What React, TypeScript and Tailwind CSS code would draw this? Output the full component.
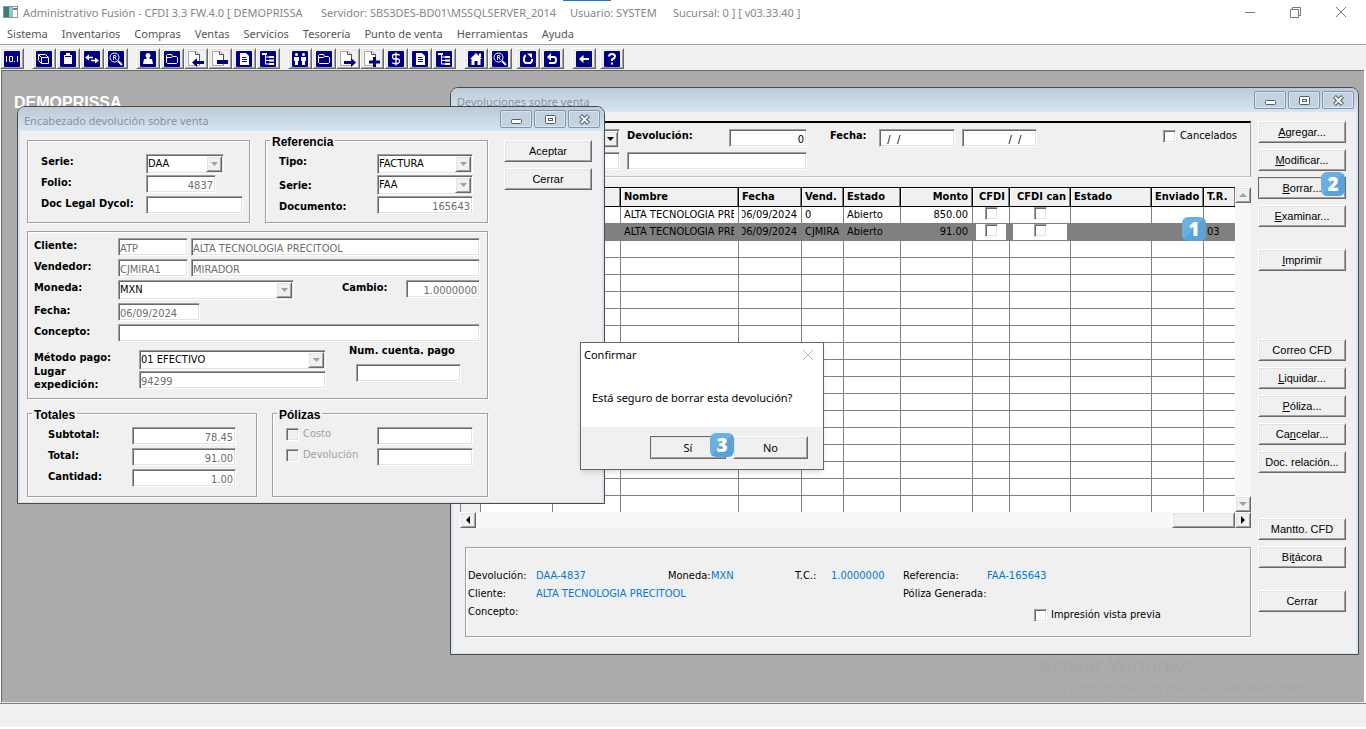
import React from 'react';
import type { ReactNode } from 'react';

const SUNKEN =
  'border border-t-[#a0a0a0] border-l-[#a0a0a0] border-r-white border-b-white shadow-[inset_1px_1px_0_#696969,inset_-1px_-1px_0_#e3e3e3]';
const RAISED =
  'border border-t-white border-l-white border-r-[#696969] border-b-[#696969] bg-[#f0f0f0] shadow-[inset_1px_1px_0_#e3e3e3,inset_-1px_-1px_0_#a0a0a0]';
const ETCHED = 'border border-[#a0a0a0] shadow-[1px_1px_0_#fff,inset_1px_1px_0_#fff]';
const DITHER = 'bg-[#f8f8f8]';

/* ---------- basic controls ---------- */

function Field({ id, label, value = '', className = '' }: { id?: string; label?: string; value?: string; className?: string }) {
  return (
    <input
      id={id}
      aria-label={label}
      defaultValue={value}
      className={`h-[18px] min-w-0 bg-white pt-[2px] pr-[2px] pl-px text-[11px] leading-[14px] outline-none ${SUNKEN} ${className}`}
    />
  );
}

function Combo({ id, label, value = '', dark = false, className = '' }: { id?: string; label?: string; value?: string; dark?: boolean; className?: string }) {
  return (
    <span className={`grid h-5 bg-white p-px ${SUNKEN} ${className}`}>
      <select
        id={id}
        aria-label={label}
        defaultValue={value}
        className="col-start-1 row-start-1 min-w-0 appearance-none bg-transparent text-[11px] leading-[14px] text-black outline-none"
      >
        <option>{value}</option>
      </select>
      <span className={`pointer-events-none col-start-1 row-start-1 flex w-4 items-center justify-center justify-self-end ${RAISED}`}>
        <svg width="7" height="4" viewBox="0 0 7 4" fill={dark ? '#000' : '#a0a0a0'}>
          <path d="M0 0h7L3.500 4z" />
        </svg>
      </span>
    </span>
  );
}

function Check({ id, label, muted = false }: { id: string; label?: string; muted?: boolean }) {
  return (
    <input
      id={id}
      aria-label={label}
      type="checkbox"
      disabled={muted}
      className={`size-[13px] shrink-0 appearance-none ${muted ? 'bg-[#f0f0f0]' : 'bg-white'} ${SUNKEN}`}
    />
  );
}

function PushButton({ text, hot = -1, primary = false, className = '' }: { text: string; hot?: number; primary?: boolean; className?: string }) {
  return (
    <button
      type="button"
      className={`h-[22px] font-["Liberation_Sans",Arial,sans-serif] text-[11px] leading-[14px] text-black ${RAISED} ${primary ? 'outline outline-1 -outline-offset-1 outline-[#696969]' : ''} ${className}`}
    >
      {hot < 0 ? (
        text
      ) : (
        <>
          {text.slice(0, hot)}
          <u className="underline-offset-1">{text[hot]}</u>
          {text.slice(hot + 1)}
        </>
      )}
    </button>
  );
}

function Label({ htmlFor, children, className = 'leading-4' }: { htmlFor?: string; children: ReactNode; className?: string }) {
  return (
    <label htmlFor={htmlFor} className={`shrink-0 whitespace-nowrap font-bold text-black ${className}`}>
      {children}
    </label>
  );
}

function Group({ legend, children, className = '' }: { legend?: string; children: ReactNode; className?: string }) {
  return (
    <fieldset className={`relative min-w-0 ${ETCHED} ${className}`}>
      {legend && (
        <legend className='absolute -top-[6px] left-1 bg-[#f0f0f0] px-[2px] font-["Liberation_Sans",Arial,sans-serif] text-[12px] font-bold leading-[14px] text-black'>
          {legend}
        </legend>
      )}
      {children}
    </fieldset>
  );
}

function Badge({ n, className = '' }: { n: number; className?: string }) {
  return (
    <span
      className={`absolute z-10 flex size-6 items-center justify-center rounded-md bg-[linear-gradient(135deg,#6cafe1_50%,#5aa2da_50%)] font-["Open_Sans",sans-serif] text-[19px] font-extrabold leading-none text-white ${className}`}
    >
      {n}
    </span>
  );
}

/* ---------- child windows ---------- */

const CAPTION_ICONS: { name: string; art: ReactNode }[] = [
  { name: 'Minimizar', art: <rect x="1.5" y="5.500" width="10" height="4" rx="1" fill="#fff" stroke="#555b66" /> },
  {
    name: 'Maximizar',
    art: (
      <>
        <rect x="1.500" y="1.500" width="10" height="8" rx="1" fill="#fff" stroke="#555b66" />
        <rect x="4.500" y="4.500" width="4" height="2" fill="#fff" stroke="#555b66" />
      </>
    ),
  },
  {
    name: 'Cerrar ventana',
    art: (
      <>
        <path d="M2.500 1.500l8 8M10.500 1.500l-8 8" stroke="#555b66" strokeWidth="4" />
        <path d="M3 2l7 7M10 2l-7 7" stroke="#fff" strokeWidth="1.800" />
      </>
    ),
  },
];

function ChildWindow({ title, className = '', children }: { title: string; className?: string; children: ReactNode }) {
  return (
    <section
      className={`absolute overflow-hidden rounded-t-lg border border-[#4a4a4a] bg-[#d7e5f3] px-[2px] pb-px ${className}`}
    >
      <header className="-mx-[2px] flex h-6 items-center bg-[linear-gradient(#bccad8,#d7e5f3)] pr-1 pl-[6px]">
        <h2 className='grow pt-[3px] font-["Noto_Sans",sans-serif] text-[11px] leading-4 text-[#8b9299]'>{title}</h2>
        <div className="flex gap-[2px]">
          {CAPTION_ICONS.map((c) => (
            <button
              key={c.name}
              type="button"
              aria-label={c.name}
              className="flex h-[18px] w-8 items-center justify-center rounded-[2px] border border-[#8493ad] bg-[#c4d2e0] shadow-[inset_0_0_0_1px_#d9e5f1]"
            >
              <svg width="13" height="11" viewBox="0 0 13 11" fill="none">
                {c.art}
              </svg>
            </button>
          ))}
        </div>
      </header>
      <div className="bg-[#f0f0f0]">{children}</div>
    </section>
  );
}

/* ---------- toolbar ---------- */

type IconName =
  | 'num' | 'copy' | 'clip' | 'swap' | 'find' | 'user' | 'folder' | 'docIn' | 'docMinus' | 'doc' | 'tree'
  | 'users' | 'docOut' | 'docPlus' | 'money' | 'home' | 'redo' | 'undo' | 'back' | 'help';

const PAGE = (
  <>
    <path d="M.5.500h7l4 3v11H.5z" fill="#fff" stroke="#a8a8a8" />
    <path d="M7.500.500v3h4v10" stroke="#555" fill="none" />
  </>
);

const ICONS: Record<IconName, ReactNode> = {
  num: <path d="M2.500 5v6M5.500 5.500h3v5h-3zM10.500 10v1M13.500 5v6" />,
  copy: <path d="M5.500 6.500h7v6h-7zM5.500 6.500l-3-3v6l3 3M2.500 3.500h7l3 3" />,
  clip: (
    <>
      <path d="M4 4h8v9H4zM6 2h4v3H6z" fill="#fff" stroke="none" />
      <path d="M5 5.500h6" stroke="#000080" />
    </>
  ),
  swap: (
    <>
      <path d="M3 6.500h6M7 9.500h6" strokeWidth="1.500" />
      <path d="M1 6.500l4-3v6zM15 9.500l-4-3v6z" fill="#fff" stroke="none" />
    </>
  ),
  find: (
    <>
      <circle cx="6.500" cy="6.500" r="4.500" />
      <path d="M5.500 9V4.500H7q1 0 1 1t-1 1H5.500M7 6.500L8.500 9" strokeWidth=".9" />
      <path d="M10 10l4 4" strokeWidth="2" />
    </>
  ),
  user: <path d="M8 2a2.500 2.500 0 0 1 1.500 4.500V8H12l1 5H3l1-5h2.500V6.500A2.500 2.500 0 0 1 8 2z" fill="#fff" stroke="none" />,
  folder: <path d="M2.500 11.500v-7l1-1h4l1 2h4l1 1v5l-1 1h-9zM2.500 6.500h5l1-1" />,
  docIn: (
    <>
      {PAGE}
      <path d="M4 11.500L9 7v3h7v3H9v3z" fill="#000080" stroke="none" />
    </>
  ),
  docMinus: (
    <>
      {PAGE}
      <path d="M5 9h11v4H5z" fill="#000080" stroke="none" />
    </>
  ),
  docOut: (
    <>
      {PAGE}
      <path d="M16 11.500L11 7v3H4v3h7v3z" fill="#000080" stroke="none" />
    </>
  ),
  docPlus: (
    <>
      {PAGE}
      <path d="M9 6h3v3.500h4v3h-4V16H9v-3.500H5v-3h4z" fill="#000080" stroke="none" />
    </>
  ),
  doc: (
    <>
      <path d="M4 2h6l3 3v9H4z" fill="#fff" stroke="none" />
      <path d="M6 6.500h4M6 8.500h5M6 10.500h5" stroke="#000080" />
    </>
  ),
  tree: (
    <>
      <path d="M2 2h5v2H2zM9 5h5v2H9zM9 8.500h5v2H9zM9 12h5v2H9z" fill="#fff" stroke="none" />
      <path d="M5.500 4v9H9M5.500 6H9M5.500 9.500H9" />
    </>
  ),
  users: (
    <path
      d="M4.500 2a1.500 1.500 0 1 1 0 3 1.500 1.500 0 0 1 0-3zM2 6h5v4H6v4H3v-4H2zM11.500 2a1.500 1.500 0 1 1 0 3 1.500 1.500 0 0 1 0-3zM9 6h5v4h-1v4h-3v-4H9z"
      fill="#fff"
      stroke="none"
    />
  ),
  money: <path d="M11.500 4.500q0-1-1.500-1H6q-1.500 0-1.500 2T6 8h4q1.500 0 1.500 2T10 12.500H6q-1.500 0-1.500-1M8 1.500v13" strokeWidth="1.300" />,
  home: <path d="M8 2l6 6h-1.500v6H9.500v-4h-3v4h-3V8H2zM11 2.500h2V6h-2z" fill="#fff" stroke="none" />,
  redo: (
    <>
      <path d="M6 4.500Q4 5 4 8v2l1.500 2h5L12 10V8" strokeWidth="2" />
      <path d="M7 2.500h5v5z" fill="#fff" stroke="none" />
    </>
  ),
  undo: (
    <>
      <path d="M6 6h4q2 0 2 3t-2 3H5" strokeWidth="2" />
      <path d="M3 6l4-4v8z" fill="#fff" stroke="none" />
    </>
  ),
  back: (
    <>
      <path d="M6 8h7" strokeWidth="2" />
      <path d="M3 8l4.500-4v8z" fill="#fff" stroke="none" />
    </>
  ),
  help: (
    <>
      <path d="M5 5.500Q5 3 8 3t3 2.500Q11 7 8 8.500V10" strokeWidth="2" />
      <path d="M7 11.500h2v2H7z" fill="#fff" stroke="none" />
    </>
  ),
};

const PLAIN: IconName[] = ['docIn', 'docMinus', 'docOut', 'docPlus'];

const TOOLBAR: { gap: string; items: IconName[] }[] = [
  { gap: '', items: ['num'] },
  { gap: 'ml-2', items: ['copy', 'clip', 'swap', 'find'] },
  { gap: 'ml-2', items: ['user', 'folder', 'docIn', 'docMinus', 'doc', 'tree'] },
  { gap: 'ml-2', items: ['users', 'folder', 'docOut', 'docPlus', 'money', 'doc', 'tree'] },
  { gap: 'ml-2', items: ['home', 'find'] },
  { gap: 'ml-1', items: ['redo', 'undo'] },
  { gap: 'ml-2', items: ['back'] },
  { gap: 'ml-1', items: ['help'] },
];

function Toolbar() {
  return (
    <div role="toolbar" className="flex h-[25px] items-end bg-[#f0f0f0] pb-px">
      {TOOLBAR.map((g, gi) => (
        <div key={gi} className={`flex ${g.gap}`}>
          {g.items.map((name, i) => (
            <button
              key={i}
              type="button"
              aria-label={name}
              className={`flex h-[21px] w-6 items-center justify-center ${RAISED}`}
            >
              <svg width="16" height="16" viewBox="0 0 16 16" fill="none" stroke="#fff">
                {!PLAIN.includes(name) && <rect width="16" height="16" rx="1" fill="#000080" stroke="none" />}
                {ICONS[name]}
              </svg>
            </button>
          ))}
        </div>
      ))}
    </div>
  );
}

/* ---------- returns list ---------- */

const COLUMNS = [
  { w: 20, text: '', cls: '' },
  { w: 72, text: '', cls: '' },
  { w: 68, text: '', cls: '' },
  { w: 118, text: 'Nombre', cls: 'text-left' },
  { w: 63, text: 'Fecha', cls: 'text-left' },
  { w: 42, text: 'Vend.', cls: 'text-left' },
  { w: 57, text: 'Estado', cls: 'text-left' },
  { w: 72, text: 'Monto', cls: 'text-right' },
  { w: 37, text: 'CFDI', cls: 'text-right' },
  { w: 61, text: 'CFDI can', cls: 'text-right' },
  { w: 81, text: 'Estado', cls: 'text-left' },
  { w: 52, text: 'Enviado', cls: 'text-left' },
  { w: 32, text: 'T.R.', cls: 'text-left' },
];

const RECORDS = [
  { name: 'ALTA TECNOLOGIA PRECITOOL', date: '06/09/2024', seller: '0', state: 'Abierto', amount: '850.00', tr: '' },
  { name: 'ALTA TECNOLOGIA PRECITOOL', date: '06/09/2024', seller: 'CJMIRA1', state: 'Abierto', amount: '91.00', tr: '03' },
];

const CELL = 'h-[17px] overflow-hidden whitespace-nowrap border-l border-b border-[#808080] p-0';

function Clip({ children, end = false }: { children: ReactNode; end?: boolean }) {
  return <div className={`mr-1 ml-[3px] flex overflow-hidden leading-4 ${end ? 'justify-end' : ''}`}>{children}</div>;
}

function RecordsTable() {
  return (
    <table className="w-full min-w-0 table-fixed border-separate border-spacing-0 bg-white text-[11px] text-black">
      <colgroup>
        {COLUMNS.map((c, i) => (
          <col key={i} style={{ width: c.w }} />
        ))}
      </colgroup>
      <thead>
        <tr>
          {COLUMNS.map((c, i) => (
            <th
              key={i}
              className={`h-5 overflow-hidden whitespace-nowrap border-t border-b border-l border-black bg-[#f0f0f0] py-0 pr-1 pl-[3px] leading-4 font-bold shadow-[inset_-1px_0_0_#808080,inset_1px_1px_0_#fff] ${c.cls}`}
            >
              {c.text}
            </th>
          ))}
        </tr>
      </thead>
      <tbody>
        {RECORDS.map((r, i) => (
          <tr key={i} className={i === 1 ? 'bg-[#808080]' : ''}>
            <td className={`${CELL} bg-[#f0f0f0]`} />
            <td className={CELL} />
            <td className={CELL} />
            <td className={CELL}><Clip>{r.name}</Clip></td>
            <td className={CELL}><Clip end>{r.date}</Clip></td>
            <td className={CELL}><Clip>{r.seller}</Clip></td>
            <td className={CELL}><Clip>{r.state}</Clip></td>
            <td className={CELL}><Clip end>{r.amount}</Clip></td>
            <td className={CELL}>
              <div className="mx-[3px] flex h-4 items-start justify-center bg-white"><Check id={`cfdi-${i}`} label="CFDI" /></div>
            </td>
            <td className={CELL}>
              <div className="mx-[3px] flex h-4 items-start justify-center bg-white"><Check id={`cfdi-can-${i}`} label="CFDI cancelado" /></div>
            </td>
            <td className={CELL} />
            <td className={CELL} />
            <td className={CELL}>
              <Clip>{r.tr}</Clip>
            </td>
          </tr>
        ))}
        {Array.from({ length: 16 }, (_, i) => (
          <tr key={i}>
            {COLUMNS.map((_c, j) => (
              <td
                key={j}
                className={`overflow-hidden border-l border-[#808080] p-0 ${i === 15 ? 'h-4' : 'h-[17px] border-b'} ${j === 0 ? 'bg-[#f0f0f0]' : ''}`}
              />
            ))}
          </tr>
        ))}
      </tbody>
    </table>
  );
}

function ScrollArrow({ label, d, active = false }: { label: string; d: string; active?: boolean }) {
  return (
    <button type="button" aria-label={label} className={`flex size-4 shrink-0 items-center justify-center ${RAISED}`}>
      <svg width="8" height="8" viewBox="0 0 8 8" fill={active ? '#000' : '#a0a0a0'}>
        <path d={d} />
      </svg>
    </button>
  );
}

function Info({ label, value }: { label: string; value?: string }) {
  return (
    <>
      <dt className="text-black">{label}</dt>
      <dd className="text-[#0078d7]">{value}</dd>
    </>
  );
}

const ACTIONS: { gap: string; items: { text: string; hot: number; primary?: boolean }[] }[] = [
  {
    gap: '',
    items: [
      { text: 'Agregar...', hot: 0 },
      { text: 'Modificar...', hot: 0 },
      { text: 'Borrar...', hot: 0, primary: true },
      { text: 'Examinar...', hot: 0 },
    ],
  },
  { gap: 'mt-[22px]', items: [{ text: 'Imprimir', hot: 0 }] },
  {
    gap: 'mt-[68px]',
    items: [
      { text: 'Correo CFD', hot: -1 },
      { text: 'Liquidar...', hot: 0 },
      { text: 'Póliza...', hot: 0 },
      { text: 'Cancelar...', hot: 2 },
      { text: 'Doc. relación...', hot: -1 },
    ],
  },
  { gap: 'mt-[45px]', items: [{ text: 'Mantto. CFD', hot: -1 }, { text: 'Bitácora', hot: 2 }] },
  { gap: 'mt-[22px]', items: [{ text: 'Cerrar', hot: -1 }] },
];

function ReturnsWindow() {
  return (
    <ChildWindow title="Devoluciones sobre venta" className="top-4 right-[5px] left-[448px]">
      <div className="flex gap-[7px] pt-[9px] pr-[10px] pb-4 pl-[7px]">
        <div className="min-w-0 grow">
          <div className="flex flex-col gap-[3px] border-t-2 border-r border-b border-t-black border-r-[#a0a0a0] border-b-[#c0c0c0] pt-[6px] pb-[6px] shadow-[0_1px_0_#fff]">
            <div className="flex h-5 items-start">
              <Combo label="Serie de la devolución" dark className="w-40" />
              <Label htmlFor="f-dev" className="ml-[7px] w-[102px] leading-[14px]">Devolución:</Label>
              <Field id="f-dev" value="0" className="w-[78px] text-right text-black" />
              <Label htmlFor="f-from" className="ml-[23px] w-[49px] leading-[14px]">Fecha:</Label>
              <Field id="f-from" value="  /  /" className="w-[76px] text-black" />
              <Field label="Fecha final" value="/  /    " className="ml-[7px] w-[75px] text-right text-black" />
              <label className="mr-[13px] ml-auto flex items-center gap-1 leading-[14px] text-black">
                <Check id="cancelados" />
                Cancelados
              </label>
            </div>
            <div className="flex">
              <Field label="Cliente" className="w-40" />
              <Field label="Nombre del cliente" className="ml-[7px] w-[180px]" />
            </div>
          </div>

          <div className="mt-[10px]">
            <div className="flex">
              <div className="min-w-0 grow">
                <RecordsTable />
              </div>
              <div className={`flex w-4 shrink-0 flex-col justify-between ${DITHER}`}>
                <ScrollArrow label="Subir" d="M0 6h8L4 2z" />
                <ScrollArrow label="Bajar" d="M0 2h8L4 6z" />
              </div>
            </div>
            <div className={`flex h-4 ${DITHER}`}>
              <ScrollArrow label="Izquierda" d="M6 0v8L2 4z" active />
              <div className={`ml-auto w-[63px] ${RAISED}`} />
              <ScrollArrow label="Derecha" d="M2 0v8l4-4z" active />
            </div>
          </div>

          <div className={`mt-[19px] ml-[5px] pt-[21px] pb-[11px] pl-[2px] leading-[14px] ${ETCHED}`}>
            <dl className="grid grid-cols-[68px_132px_43px_84px_36px_72px_84px_1fr] gap-y-1 whitespace-nowrap">
              <Info label="Devolución:" value="DAA-4837" />
              <Info label="Moneda:" value="MXN" />
              <Info label="T.C.:" value="1.0000000" />
              <Info label="Referencia:" value="FAA-165643" />
              <dt className="text-black">Cliente:</dt>
              <dd className="col-span-5 text-[#0078d7]">ALTA TECNOLOGIA PRECITOOL</dd>
              <dt className="col-span-2 text-black">Póliza Generada:</dt>
              <dt className="text-black">Concepto:</dt>
              <dd className="col-start-8 flex h-5 items-center pl-[47px]">
                <label className="flex items-center gap-1 text-black">
                  <Check id="vista" />
                  Impresión vista previa
                </label>
              </dd>
            </dl>
          </div>
        </div>

        <div className="flex w-[88px] shrink-0 flex-col">
          {ACTIONS.map((g, i) => (
            <div key={i} className={`flex flex-col gap-[6px] ${g.gap}`}>
              {g.items.map((b) => (
                <PushButton key={b.text} {...b} />
              ))}
            </div>
          ))}
        </div>
      </div>
    </ChildWindow>
  );
}

/* ---------- return header form ---------- */

function HeaderWindow() {
  return (
    <ChildWindow title="Encabezado devolución sobre venta" className="top-[35px] left-[15px] w-[588px]">
      <form className="flex gap-4 pt-[9px] pr-[10px] pb-[5px] pl-[7px] text-[#6d6d6d]">
        <div className="w-[461px]">
          <div className="flex gap-[15px]">
            <Group className="w-[223px] pt-[13px] pb-[5px] pl-[13px]">
              <div className="flex h-[21px]">
                <Label htmlFor="serie" className="w-[105px] leading-4">Serie:</Label>
                <Combo id="serie" value="DAA" className="w-[78px]" />
              </div>
              <div className="flex h-[21px]">
                <Label htmlFor="folio" className="w-[105px] leading-4">Folio:</Label>
                <Field id="folio" value="4837" className="w-[70px] text-right" />
              </div>
              <div className="flex h-[21px]">
                <Label htmlFor="dycol" className="w-[105px] leading-4">Doc Legal Dycol:</Label>
                <Field id="dycol" className="w-[97px]" />
              </div>
            </Group>
            <Group legend="Referencia" className="grow pt-[13px] pb-[5px] pl-[13px]">
              <div className="flex h-[21px]">
                <Label htmlFor="tipo" className="w-[98px] leading-4">Tipo:</Label>
                <Combo id="tipo" value="FACTURA" className="w-[96px]" />
              </div>
              <div className="flex h-[21px]">
                <Label htmlFor="rserie" className="w-[98px] pt-[3px] leading-4">Serie:</Label>
                <Combo id="rserie" value="FAA" className="w-[96px]" />
              </div>
              <div className="flex h-[21px]">
                <Label htmlFor="rdoc" className="w-[98px] pt-[3px] leading-4">Documento:</Label>
                <Field id="rdoc" value="165643" className="w-[96px] text-right" />
              </div>
            </Group>
          </div>

          <Group className="mt-2 pt-[6px] pr-[7px] pb-[7px] pl-[6px]">
            <div className="flex h-[21px]">
              <Label htmlFor="cli" className="w-[84px] leading-4">Cliente:</Label>
              <Field id="cli" value="ATP" className="w-[70px]" />
              <Field label="Nombre" value="ALTA TECNOLOGIA PRECITOOL" className="ml-[3px] grow" />
            </div>
            <div className="flex h-[21px]">
              <Label htmlFor="ven" className="w-[84px] leading-4">Vendedor:</Label>
              <Field id="ven" value="CJMIRA1" className="w-[70px]" />
              <Field label="Nombre del vendedor" value="MIRADOR" className="ml-[3px] grow" />
            </div>
            <div className="flex h-[23px]">
              <Label htmlFor="mon" className="w-[84px] leading-4">Moneda:</Label>
              <Combo id="mon" value="MXN" className="w-[176px]" />
              <Label htmlFor="cam" className="ml-auto w-16 leading-4">Cambio:</Label>
              <Field id="cam" value="1.0000000" className="w-[74px] text-right" />
            </div>
            <div className="flex h-[21px]">
              <Label htmlFor="fec" className="w-[84px] leading-4">Fecha:</Label>
              <Field id="fec" value="06/09/2024" className="w-[82px]" />
            </div>
            <div className="flex h-[19px]">
              <Label htmlFor="con" className="w-[84px] leading-4">Concepto:</Label>
              <Field id="con" className="grow" />
            </div>
            <div className="flex">
              <div className="flex w-[105px] flex-col pt-2">
                <Label htmlFor="met" className="leading-[14px]">Método pago:</Label>
                <label htmlFor="lug" className="font-bold leading-[13px] text-black">
                  Lugar
                  <br />
                  expedición:
                </label>
              </div>
              <div className="flex w-[187px] flex-col gap-px pt-[7px]">
                <Combo id="met" value="01 EFECTIVO" />
                <Field id="lug" value="94299" />
              </div>
              <div className="ml-[23px] flex flex-col gap-[5px]">
                <Label htmlFor="cta">Num. cuenta. pago</Label>
                <Field id="cta" className="ml-[7px] w-[105px]" />
              </div>
            </div>
          </Group>

          <div className="mt-[14px] flex gap-[15px]">
            <Group legend="Totales" className="w-[230px] pt-[13px] pb-[6px] pl-5">
              {[
                ['Subtotal:', '78.45'],
                ['Total:', '91.00'],
                ['Cantidad:', '1.00'],
              ].map(([name, value]) => (
                <div key={name} className="flex h-[21px]">
                  <Label htmlFor={name} className="w-[84px] leading-4">{name}</Label>
                  <Field id={name} value={value} className="w-[104px] text-right" />
                </div>
              ))}
            </Group>
            <Group legend="Pólizas" className="grow pt-[13px] pb-[6px] pl-[13px]">
              {['Costo', 'Devolución'].map((name) => (
                <div key={name} className="flex h-[21px] items-start">
                  <label className="flex w-[91px] items-center gap-1 leading-[14px] text-[#a0a0a0]">
                    <Check id={`pol-${name}`} muted />
                    {name}
                  </label>
                  <Field label={`Póliza ${name}`} className="w-[96px]" />
                </div>
              ))}
            </Group>
          </div>
        </div>
        <div className="flex w-[88px] flex-col gap-[6px]">
          <PushButton text="Aceptar" />
          <PushButton text="Cerrar" />
        </div>
      </form>
    </ChildWindow>
  );
}

/* ---------- confirmation ---------- */

function ConfirmDialog() {
  return (
    <div
      role="dialog"
      aria-label="Confirmar"
      className='absolute top-[271px] left-[578px] w-[244px] border border-[#666] bg-white font-["Noto_Sans",sans-serif] text-[11px] text-black shadow-md'
    >
      <div className="flex h-6 items-center justify-between pr-[10px] pl-[3px]">
        <h2 className="leading-4">Confirmar</h2>
        <button type="button" aria-label="Cerrar diálogo">
          <svg width="10" height="10" viewBox="0 0 10 10" stroke="#b8b8b8">
            <path d="M0 0l10 10M10 0L0 10" />
          </svg>
        </button>
      </div>
      <p className="px-[11px] pt-[23px] pb-[21px] leading-4">Está seguro de borrar esta devolución?</p>
      <div className="flex justify-end gap-[7px] bg-[#f0f0f0] pt-[9px] pr-[15px] pb-[10px]">
        <button type="button" className={`h-[23px] w-[76px] leading-4 outline outline-1 -outline-offset-1 outline-[#696969] ${RAISED}`}>Sí</button>
        <button type="button" className={`h-[23px] w-[75px] leading-4 ${RAISED}`}>No</button>
      </div>
      <Badge n={3} className="top-[90px] left-[129px]" />
    </div>
  );
}

const MENU = ['Sistema', 'Inventarios', 'Compras', 'Ventas', 'Servicios', 'Tesorería', 'Punto de venta', 'Herramientas', 'Ayuda'];

export default function App() {
  return (
    <div className='flex min-h-screen flex-col overflow-hidden bg-white font-["DejaVu_Sans_Condensed","DejaVu_Sans",Tahoma,sans-serif] text-[11px]'>
      <header className='relative flex h-6 items-center pr-5 pl-[3px] font-["Noto_Sans",sans-serif] text-[11px] text-[#868686]'>
        <span className="absolute top-0 left-[563px] h-px w-12 bg-[#1979ca]" />
        <svg width="15" height="12" viewBox="0 0 15 12" className="mr-[5px]">
          <rect x=".5" y=".5" width="14" height="11" fill="#fff" stroke="#8b9298" />
          <path d="M1 1h5v10H1z" fill="#2f8077" />
          <path d="M6 1h4v10H6z" fill="#9cc3c5" />
          <path d="M10 2h4v2h-4z" fill="#5b87b8" />
        </svg>
        <h1 className="flex pt-px leading-4 whitespace-pre">
          <span className="w-[298px]">Administrativo Fusión - CFDI 3.3 FW.4.0 [ DEMOPRISSA</span>
          <span className="w-[249px]">Servidor: SBS3DES-BD01\MSSQLSERVER_2014</span>
          <span className="w-[103px]">Usuario: SYSTEM</span>
          <span>Sucursal: 0 ] [ v03.33.40 ]</span>
        </h1>
        <div className="ml-auto flex items-center gap-[35px]">
          <button type="button" aria-label="Minimizar aplicación">
            <svg width="10" height="10" viewBox="0 0 10 10" stroke="#777"><path d="M0 5.500h10" /></svg>
          </button>
          <button type="button" aria-label="Restaurar aplicación">
            <svg width="11" height="11" viewBox="0 0 11 11" fill="none" stroke="#777"><path d="M.5 2.500h8v8h-8zM2.500 2.500v-2h8v8h-2" /></svg>
          </button>
          <button type="button" aria-label="Cerrar aplicación">
            <svg width="10" height="10" viewBox="0 0 10 10" stroke="#777"><path d="M0 0l10 10M10 0L0 10" /></svg>
          </button>
        </div>
      </header>

      <nav className='flex h-[21px] items-center gap-[14px] border-b border-[#a0a0a0] pl-[7px] font-["Noto_Sans",sans-serif] text-[11px] leading-4 text-[#555]'>
        {MENU.map((m) => (
          <a key={m} href="#">{m}</a>
        ))}
      </nav>

      <Toolbar />

      <main className="relative mr-[2px] ml-px min-h-[632px] grow border-t border-b border-l border-[#696969] border-b-[#e8e8e8] bg-[#ababab]">
        <p className='absolute top-[23px] left-3 font-["Liberation_Sans",Arial,sans-serif] text-[16px] leading-[18px] font-bold text-white'>DEMOPRISSA</p>
        <div className='absolute right-[53px] bottom-1 font-["Noto_Sans",sans-serif] text-[#a7a7a7]'>
          <p className="text-[20px] leading-6">Activar Windows</p>
          <p className="text-[14px] leading-5">Ve a Configuración para activar Windows.</p>
        </div>
        <ReturnsWindow />
        <Badge n={1} className="top-[146px] right-[158px]" />
        <Badge n={2} className="top-[101px] right-[19px]" />
        <HeaderWindow />
        <ConfirmDialog />
      </main>

      <footer className="mb-[2px] h-6 border-t border-[#808080] bg-[#f0f0f0]" />
    </div>
  );
}
